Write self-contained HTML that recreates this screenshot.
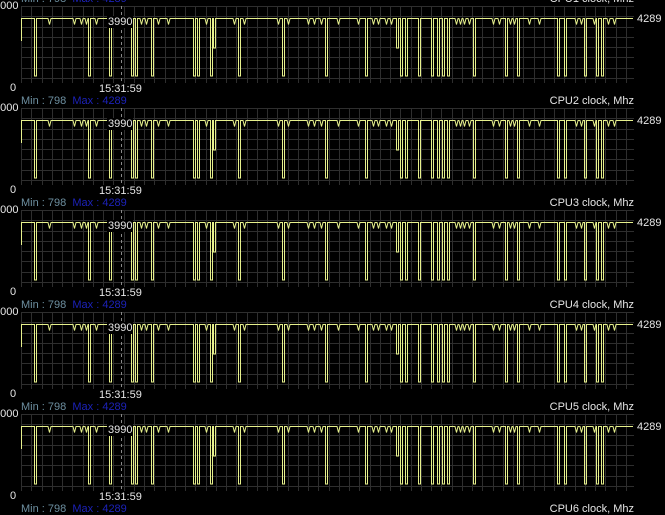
<!DOCTYPE html>
<html><head><meta charset="utf-8"><style>
html,body{margin:0;padding:0;background:#000;width:665px;height:515px;overflow:hidden}
body{position:relative;font-family:"Liberation Sans",sans-serif;font-size:11px;color:#e6e6e6}
.t{position:absolute;white-space:nowrap;line-height:12px}
.mn{color:#6d8fa0}.mx{color:#1c22b8}
svg{position:absolute;left:0;top:0}
</style></head><body>
<svg id="s" width="665" height="515"></svg>
<div id="txt"></div>
<script>
(function(){
var deep=[22,34,88,109,131,135,151,193,197,210,238,282,325,365,400,405,418,431,437,442,447,473,505,517,557,564,584,596,601];
var med=[213,396];
var small=[48,73,80,85,95,140,145,157,167,205,233,243,277,287,307,313,320,337,357,372,377,385,390,455,459,463,468,492,498,509,513,528,538,575,580,593,607,613];
var svg=document.getElementById('s'),h='',tx='';
for(var p=0;p<5;p++){
 var T=6+102*p,B=T+77;
 for(var gx=21;gx<=634;gx+=10.25)h+='<line x1="'+(Math.round(gx)+0.5)+'" y1="'+T+'" x2="'+(Math.round(gx)+0.5)+'" y2="'+B+'" stroke="#2e2e2e" stroke-width="1"/>';
 for(var gy=T;gy<=B+0.5;gy+=10.25)h+='<line x1="21" y1="'+(Math.round(gy)+0.5)+'" x2="634" y2="'+(Math.round(gy)+0.5)+'" stroke="#2e2e2e" stroke-width="1"/>';
 h+='<line x1="121.5" y1="'+T+'" x2="121.5" y2="'+B+'" stroke="#888" stroke-dasharray="3,3"/>';
 var yt=T+12.5,yb=T+70,ym=T+42;
 var pts=[];
 var ev={};
 deep.forEach(function(x){ev[x]=['d',yb]});
 med.forEach(function(x){ev[x]=['d',ym]});
 small.forEach(function(x){if(!ev[x])ev[x]=['s',yt+6]});
 pts.push('21.5,'+(T+35));pts.push('21.5,'+yt);
 for(var x=23;x<=633;x++){
  if(ev[x]){
   if(ev[x][0]=='d'){pts.push((x+0.5)+','+yt,(x+0.5)+','+ev[x][1],(x+2.5)+','+ev[x][1],(x+2.5)+','+yt);x+=2;}
   else{pts.push(x+','+yt,(x+1.5)+','+ev[x][1],(x+3)+','+yt);x+=2;}
  } else pts.push(x+','+yt);
 }
 h+='<polyline points="'+pts.join(' ')+'" fill="none" stroke="#e6f08c" stroke-width="1"/>';
 tx+='<div class="t" style="left:-6px;top:'+(T-6)+'px">5000</div>';
 tx+='<div class="t" style="left:10px;top:'+(B-1)+'px">0</div>';
 tx+='<div class="t" style="left:637px;top:'+(yt-6)+'px">4289</div>';
 tx+='<div class="t" style="left:107px;top:'+(yt-3)+'px;background:#000;padding:0 1px">3990</div>';
 tx+='<div class="t" style="left:99px;top:'+(B)+'px">15:31:59</div>';
 tx+='<div class="t" style="left:21px;top:'+(T-13)+'px"><span class="mn">Min : 798</span>&nbsp;&nbsp;<span class="mx">Max : 4289</span></div>';
 tx+='<div class="t" style="right:31px;top:'+(T-13)+'px">CPU'+(p+1)+' clock, Mhz</div>';
}
tx+='<div class="t" style="left:21px;top:503px"><span class="mn">Min : 798</span>&nbsp;&nbsp;<span class="mx">Max : 4289</span></div>';
tx+='<div class="t" style="right:31px;top:503px">CPU6 clock, Mhz</div>';
svg.innerHTML=h;document.getElementById('txt').innerHTML=tx;
})();
</script>
</body></html>
